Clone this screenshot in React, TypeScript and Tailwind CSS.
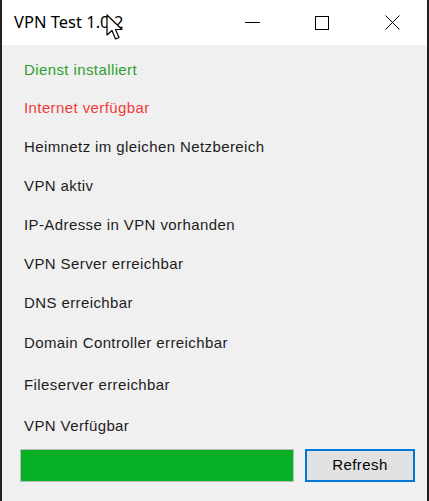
import React from "react";

const checks = [
  { label: "Dienst installiert", color: "text-[#2f9e2f]", h: "h-[38px]" },
  { label: "Internet verfügbar", color: "text-[#f23a3a]", h: "h-[39px]" },
  { label: "Heimnetz im gleichen Netzbereich", color: "text-[#1c1c1c]", h: "h-[39px]" },
  { label: "VPN aktiv", color: "text-[#1c1c1c]", h: "h-[39px]" },
  { label: "IP-Adresse in VPN vorhanden", color: "text-[#1c1c1c]", h: "h-[39px]" },
  { label: "VPN Server erreichbar", color: "text-[#1c1c1c]", h: "h-[39px]" },
  { label: "DNS erreichbar", color: "text-[#1c1c1c]", h: "h-[39px]" },
  { label: "Domain Controller erreichbar", color: "text-[#1c1c1c]", h: "h-[41px]" },
  { label: "Fileserver erreichbar", color: "text-[#1c1c1c]", h: "h-[42px]" },
  { label: "VPN Verfügbar", color: "text-[#1c1c1c]", h: "h-[40px]" },
];

function Cursor() {
  return (
    <svg
      className="absolute left-[104px] top-[14px]"
      width="18"
      height="28"
      viewBox="0 0 18 28"
    >
      <path
        d="M1 1 L1 21 L6 16.5 L9.5 25 L13 23.5 L9.5 15.5 L16 15.5 Z"
        fill="#fff"
        stroke="#000"
        strokeWidth="1.2"
        strokeLinejoin="round"
      />
    </svg>
  );
}

export default function App() {
  return (
    <div className="h-[501px] w-[429px] overflow-hidden bg-[#202020] pl-[2px] pr-[2px] font-['Liberation_Sans',Arial,sans-serif]">
      <div className="flex h-full flex-col bg-[#f0f0f0]">
        <div className="relative flex h-[45px] items-center bg-white">
          <span className="pl-[12px] font-['Noto_Sans',sans-serif] text-[16.5px] text-black">
            VPN Test 1.0.2
          </span>
          <div className="ml-auto flex h-full items-center">
            <div className="flex h-full w-[70px] items-center justify-center">
              <span className="mt-[-1px] block h-px w-[15px] bg-black" />
            </div>
            <div className="flex h-full w-[70px] items-center justify-center">
              <span className="block h-[14px] w-[14px] border border-black" />
            </div>
            <div className="flex h-full w-[70px] items-center justify-center">
              <svg width="15" height="15" viewBox="0 0 15 15">
                <path d="M0.5 0.5 L14.5 14.5 M14.5 0.5 L0.5 14.5" stroke="#000" strokeWidth="1" />
              </svg>
            </div>
          </div>
          <Cursor />
        </div>

        <div className="flex flex-col pt-[6px] pl-[22px]">
          {checks.map((c) => (
            <div key={c.label} className={`flex items-center ${c.h}`}>
              <span className={`text-[15px] tracking-[0.4px] ${c.color}`}>{c.label}</span>
            </div>
          ))}
        </div>

        <div className="mt-[3px] flex items-center pl-[18px]">
          <div className="h-[33px] w-[274px] border border-[#bcbcbc] bg-[#06b025]" />
          <button className="ml-[11px] flex h-[33px] w-[110px] items-center justify-center border-2 border-[#0078d7] bg-[#e1e1e1] text-[15px] tracking-[0.4px] text-black">
            Refresh
          </button>
        </div>
      </div>
    </div>
  );
}
